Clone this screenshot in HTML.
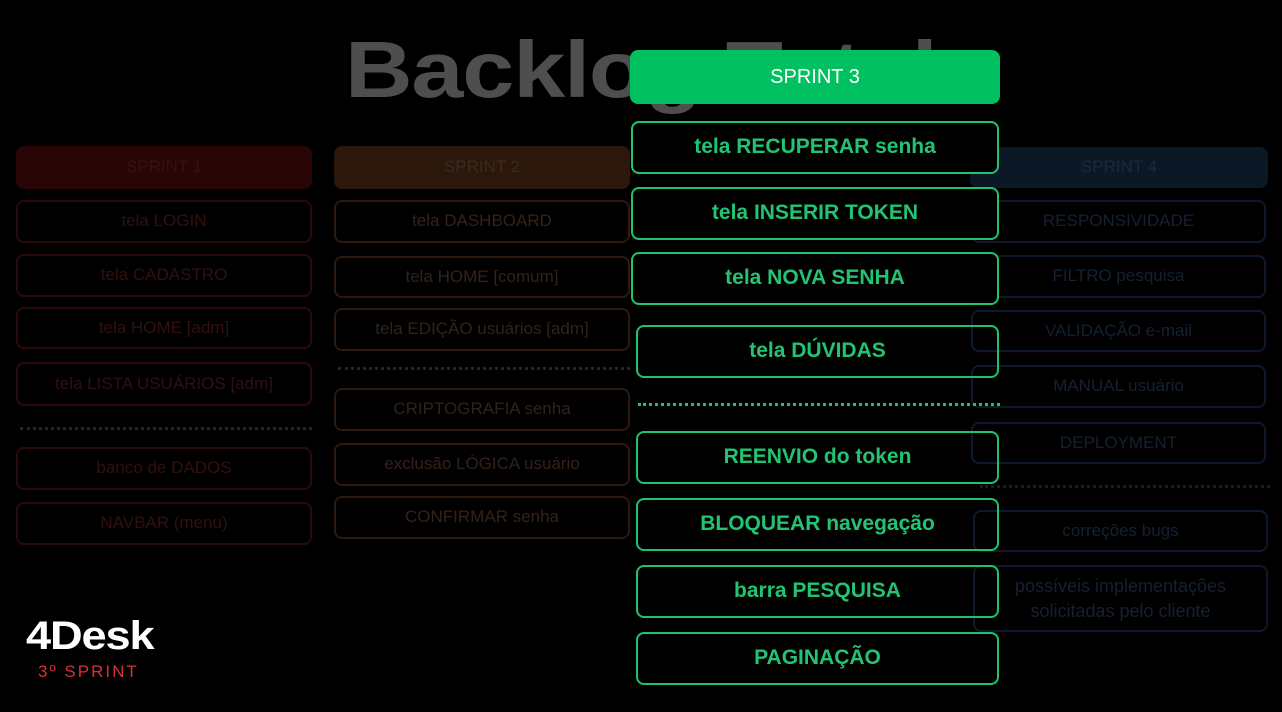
<!DOCTYPE html>
<html><head><meta charset="utf-8"><style>
*{margin:0;padding:0;box-sizing:border-box}
body{width:1282px;height:712px;background:#000;position:relative;overflow:hidden;font-family:"Liberation Sans",sans-serif}
.b{position:absolute;display:flex;align-items:center;justify-content:center;text-align:center;border-radius:8px;font-size:17px;line-height:1.35}
.r{border:2px solid #2c0a0a;color:#321010}
.o{border:2px solid #2a1a10;color:#33221a}
.u{border:2px solid #0e1a2a;color:#162030}
.g{border:2.5px solid #1ec46c;color:#22c472;font-size:21px;font-weight:bold}
.d{position:absolute;height:0;border-top:3px dotted}
</style></head><body>
<div style="position:absolute;left:345px;top:24px;font-size:80px;font-weight:bold;color:#4e4e4e;transform:scaleX(1.17);transform-origin:left top;letter-spacing:-1px">Backlog Total</div>

<div class="b" style="left:16px;top:146px;width:296px;height:43px;background:#2a0505;color:#3a1010">SPRINT 1</div>
<div class="b r" style="left:16px;top:200px;width:296px;height:43px">tela LOGIN</div>
<div class="b r" style="left:16px;top:254px;width:296px;height:43px">tela CADASTRO</div>
<div class="b r" style="left:16px;top:307px;width:296px;height:42px">tela HOME [adm]</div>
<div class="b r" style="left:16px;top:362px;width:296px;height:44px">tela LISTA USUÁRIOS [adm]</div>
<div class="d" style="left:20px;top:427px;width:292px;border-color:#262626"></div>
<div class="b r" style="left:16px;top:447px;width:296px;height:43px">banco de DADOS</div>
<div class="b r" style="left:16px;top:502px;width:296px;height:43px">NAVBAR (menu)</div>

<div class="b" style="left:334px;top:146px;width:296px;height:43px;background:#2b170c;color:#3d2a1e">SPRINT 2</div>
<div class="b o" style="left:334px;top:200px;width:296px;height:43px">tela DASHBOARD</div>
<div class="b o" style="left:334px;top:256px;width:296px;height:42px">tela HOME [comum]</div>
<div class="b o" style="left:334px;top:308px;width:296px;height:43px">tela EDIÇÃO usuários [adm]</div>
<div class="d" style="left:338px;top:367px;width:292px;border-color:#262626"></div>
<div class="b o" style="left:334px;top:388px;width:296px;height:43px">CRIPTOGRAFIA senha</div>
<div class="b o" style="left:334px;top:443px;width:296px;height:43px">exclusão LÓGICA usuário</div>
<div class="b o" style="left:334px;top:496px;width:296px;height:43px">CONFIRMAR senha</div>

<div class="b" style="left:970px;top:147px;width:298px;height:41px;background:#0c1826;color:#1e2a38">SPRINT 4</div>
<div class="b u" style="left:971px;top:200px;width:295px;height:43px">RESPONSIVIDADE</div>
<div class="b u" style="left:971px;top:255px;width:295px;height:43px">FILTRO pesquisa</div>
<div class="b u" style="left:971px;top:310px;width:295px;height:42px">VALIDAÇÃO e-mail</div>
<div class="b u" style="left:971px;top:365px;width:295px;height:43px">MANUAL usuário</div>
<div class="b u" style="left:971px;top:422px;width:295px;height:42px">DEPLOYMENT</div>
<div class="d" style="left:980px;top:485px;width:290px;border-color:#161e28"></div>
<div class="b u" style="left:973px;top:510px;width:295px;height:42px">correções bugs</div>
<div class="b u" style="left:973px;top:565px;width:295px;height:67px;font-size:18px">possíveis implementações<br>solicitadas pelo cliente</div>

<div class="b" style="left:630px;top:50px;width:370px;height:54px;background:#00c060;color:#fff;font-size:20px">SPRINT 3</div>
<div class="b g" style="left:631px;top:121px;width:368px;height:53px;background:#000">tela RECUPERAR senha</div>
<div class="b g" style="left:631px;top:187px;width:368px;height:53px;background:#000">tela INSERIR TOKEN</div>
<div class="b g" style="left:631px;top:252px;width:368px;height:53px;background:#000">tela NOVA SENHA</div>
<div class="b g" style="left:636px;top:325px;width:363px;height:53px">tela DÚVIDAS</div>
<div class="d" style="left:638px;top:403px;width:362px;border-color:#1ec46c"></div>
<div class="b g" style="left:636px;top:431px;width:363px;height:53px">REENVIO do token</div>
<div class="b g" style="left:636px;top:498px;width:363px;height:53px">BLOQUEAR navegação</div>
<div class="b g" style="left:636px;top:565px;width:363px;height:53px">barra PESQUISA</div>
<div class="b g" style="left:636px;top:632px;width:363px;height:53px">PAGINAÇÃO</div>

<div style="position:absolute;left:26px;top:614px;font-size:40px;font-weight:bold;color:#fff;transform:scaleX(1.13);transform-origin:left top;letter-spacing:-1px">4Desk</div>
<div style="position:absolute;left:38px;top:662px;font-size:17px;color:#d8303a;letter-spacing:2px">3º SPRINT</div>
</body></html>
